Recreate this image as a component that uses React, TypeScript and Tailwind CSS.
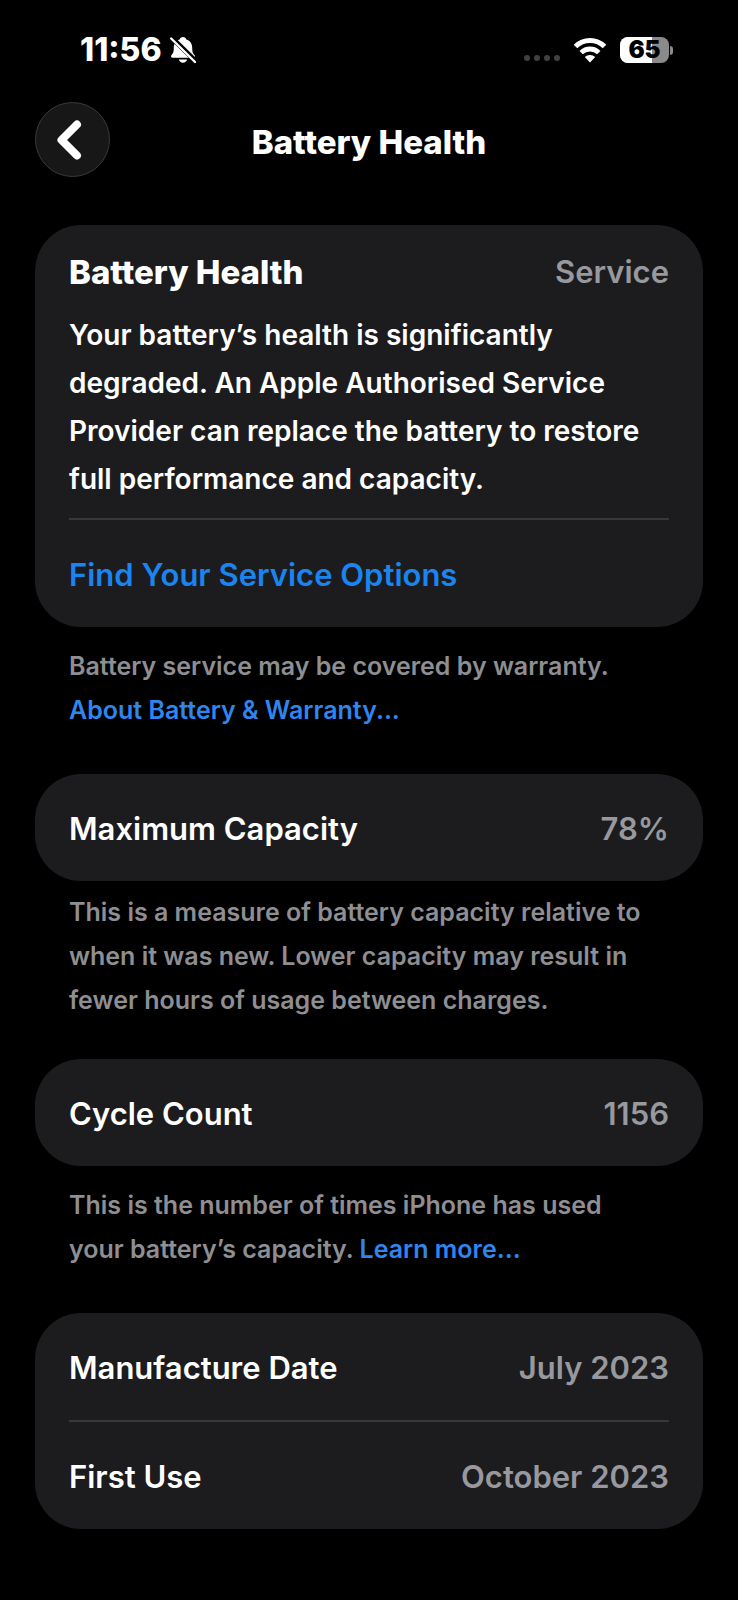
import type { ReactNode } from "react";

function BellOffIcon() {
  return (
    <svg width="26" height="28" viewBox="0 0 26 28" fill="none" aria-label="Silent mode">
      <path
        d="M13 1c1.800 0 3 1 3.400 2.500 3.800 1.200 5.800 4.200 5.800 8.200 0 4.600.8 5.600 2.300 7.300 1 1.200.5 2.800-1.300 2.800H2.800C1 21.800.5 20.200 1.500 19c1.500-1.700 2.300-2.700 2.300-7.300 0-4 2-7 5.800-8.200C10 2 11.200 1 13 1Z"
        fill="#fff"
      />
      <path d="M8.800 23.600h8.400c-.5 2-2.100 3.200-4.200 3.200s-3.700-1.200-4.200-3.200Z" fill="#fff" />
      <path d="M1.500 1.500 26 25.500" stroke="#000" strokeWidth="5" />
      <path d="M1.200 2.500 25 26" stroke="#fff" strokeWidth="2.400" strokeLinecap="round" />
    </svg>
  );
}

function WifiIcon() {
  return (
    <svg width="34" height="26" viewBox="0 0 34 26" fill="none" aria-label="Wi-Fi">
      <path d="M2.500 9.400a20.500 20.500 0 0 1 29 0" stroke="#fff" strokeWidth="5" />
      <path d="M8.200 15.600a12.500 12.500 0 0 1 17.600 0" stroke="#fff" strokeWidth="4.800" />
      <path d="M17 25.400l-5.200-5.300a7.500 7.500 0 0 1 10.400 0L17 25.400Z" fill="#fff" />
    </svg>
  );
}

function Battery({ level }: { level: number }) {
  return (
    <div className="flex items-center gap-px">
      <div className="relative flex h-[26px] w-[49px] items-center justify-center rounded-[8px] bg-[#8a8a8a]">
        <div className="absolute inset-y-0 left-0 rounded-l-[8px] bg-white" style={{ width: `${level}%` }} />
        <span className="relative text-[24px] leading-[26px] font-black text-black">{level}</span>
      </div>
      <div className="h-[9px] w-[3px] rounded-r-full bg-[#8a8a8a]" />
    </div>
  );
}

function StatusBar() {
  return (
    <div className="flex h-[26px] items-center justify-between pr-[65px] pl-20">
      <div className="flex items-center gap-2">
        <span className="text-[32px] leading-[26px] font-extrabold">11:56</span>
        <BellOffIcon />
      </div>
      <div className="flex items-center gap-[13px]">
        <div className="flex gap-1 pt-4">
          {[0, 1, 2, 3].map((i) => (
            <span key={i} className="size-[6px] rounded-full bg-[#414141]" />
          ))}
        </div>
        <WifiIcon />
        <Battery level={65} />
      </div>
    </div>
  );
}

function Card({ children }: { children: ReactNode }) {
  return <section className="rounded-[46px] bg-[#1c1c1e] px-[34px]">{children}</section>;
}

function Row({ label, value }: { label: string; value: string }) {
  return (
    <div className="flex h-[107px] items-center justify-between pt-1 text-[31px] font-semibold">
      <span>{label}</span>
      <span className="text-[#98989f]">{value}</span>
    </div>
  );
}

function Footnote({ children }: { children: ReactNode }) {
  return <p className="pr-11 pl-[34px] text-[25px] leading-[44px] font-semibold text-[#8e8e93]">{children}</p>;
}

function Divider() {
  return <hr className="border-t-2 border-[#38383a]" />;
}

export default function App() {
  return (
    <div className="min-h-screen bg-black pt-[37px] pb-[71px] font-['Inter',sans-serif] text-white">
      <StatusBar />

      <header className="mt-[39px] grid grid-cols-[75px_1fr_75px] items-center px-[35px]">
        <button
          type="button"
          aria-label="Back"
          className="flex size-[75px] items-center justify-center rounded-full border border-[#3a3a3a] bg-[#171717]"
        >
          <svg width="40" height="44" viewBox="0 0 40 44" fill="none">
            <path
              d="M24 6.500 8.500 22 24 37.500"
              stroke="#fff"
              strokeWidth="8"
              strokeLinecap="round"
              strokeLinejoin="round"
            />
          </svg>
        </button>
        <h1 className="pt-1 text-center text-[33px] leading-[48px] font-extrabold">Battery Health</h1>
      </header>

      <main className="mt-12 px-[35px]">
        <Card>
          <div className="flex items-center justify-between pt-[23px] leading-[48px]">
            <h2 className="text-[33px] font-extrabold">Battery Health</h2>
            <span className="text-[31px] font-semibold text-[#98989f]">Service</span>
          </div>
          <p className="mt-[15px] pb-[15px] text-[28px] leading-[48px] font-semibold">
            Your battery’s health is significantly degraded. An Apple Authorised Service Provider can replace the
            battery to restore full performance and capacity.
          </p>
          <Divider />
          <a href="#service" className="flex h-[107px] items-center pt-1 text-[31px] font-semibold text-[#1a84f0]">
            Find Your Service Options
          </a>
        </Card>
        <div className="mt-[17px] mb-[42px]">
          <Footnote>
            Battery service may be covered by warranty.
            <br />
            <a href="#warranty" className="text-[#2f86ee]">
              About Battery &amp; Warranty...
            </a>
          </Footnote>
        </div>

        <Card>
          <Row label="Maximum Capacity" value="78%" />
        </Card>
        <div className="mt-[9px] mb-[37px]">
          <Footnote>
            This is a measure of battery capacity relative to when it was new. Lower capacity may result in fewer
            hours of usage between charges.
          </Footnote>
        </div>

        <Card>
          <Row label="Cycle Count" value="1156" />
        </Card>
        <div className="mt-[17px] mb-[42px]">
          <Footnote>
            This is the number of times iPhone has used
            <br />
            your battery’s capacity.{" "}
            <a href="#cycles" className="text-[#2f86ee]">
              Learn more...
            </a>
          </Footnote>
        </div>

        <Card>
          <Row label="Manufacture Date" value="July 2023" />
          <Divider />
          <Row label="First Use" value="October 2023" />
        </Card>
      </main>
    </div>
  );
}
